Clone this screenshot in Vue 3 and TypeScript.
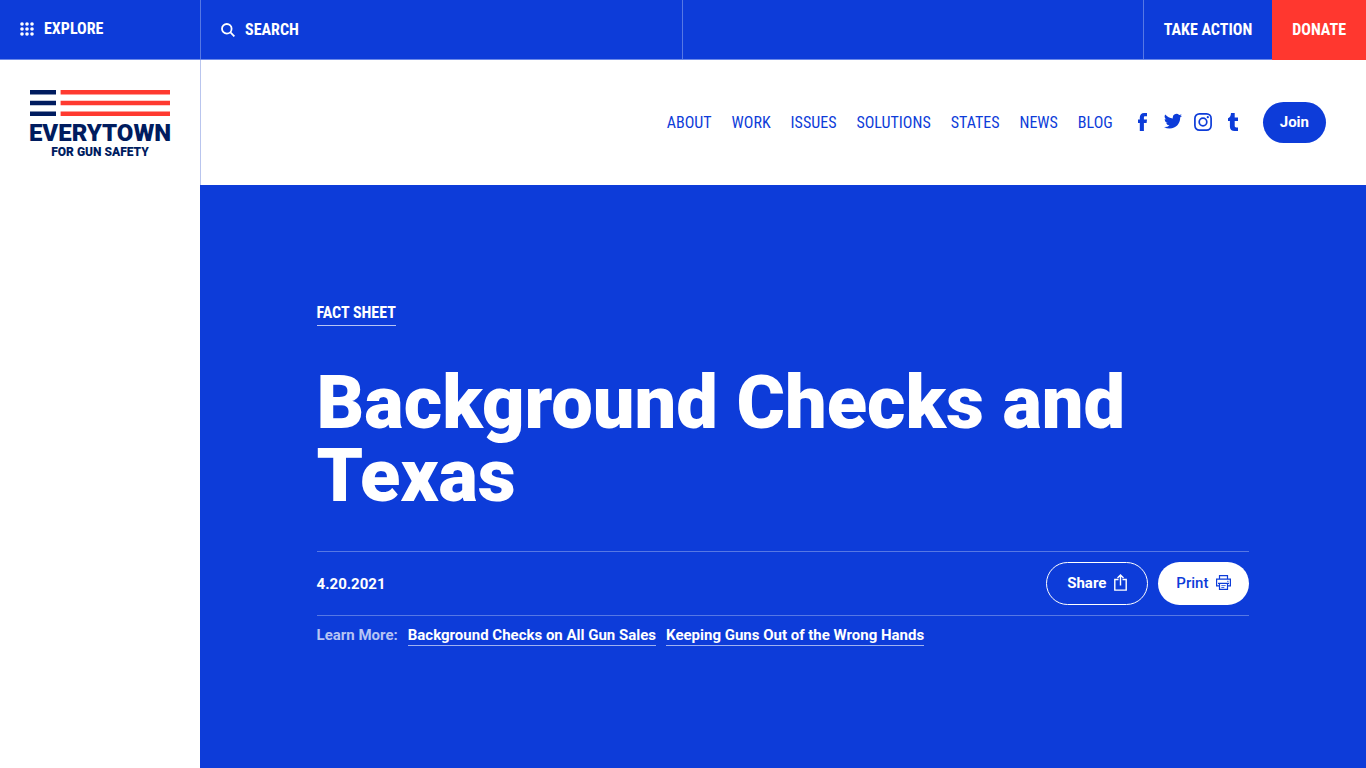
<script setup lang="ts">
interface LinkItem {
  label: string
  href: string
}

const navItems: LinkItem[] = [
  { label: 'ABOUT', href: '#about' },
  { label: 'WORK', href: '#work' },
  { label: 'ISSUES', href: '#issues' },
  { label: 'SOLUTIONS', href: '#solutions' },
  { label: 'STATES', href: '#states' },
  { label: 'NEWS', href: '#news' },
  { label: 'BLOG', href: '#blog' },
]

const learnMore: LinkItem[] = [
  { label: 'Background Checks on All Gun Sales', href: '#background-checks' },
  { label: 'Keeping Guns Out of the Wrong Hands', href: '#keeping-guns-out' },
]

const dots: number[] = [2, 7, 12]
</script>

<template>
  <div class="page">
    <div class="topbar">
      <div class="top-left">
        <button class="top-item explore" type="button">
          <svg width="14" height="14" viewBox="0 0 14 14" fill="currentColor" aria-hidden="true">
            <template v-for="y in dots" :key="y">
              <circle v-for="x in dots" :key="x" :cx="x" :cy="y" r="1.8" />
            </template>
          </svg>
          <span>EXPLORE</span>
        </button>
        <button class="top-item search" type="button">
          <svg width="14" height="14" viewBox="0 0 14 14" fill="none" stroke="currentColor" stroke-width="1.8" aria-hidden="true">
            <circle cx="5.8" cy="5.8" r="4.8" />
            <path d="M9.2 9.2 13.4 13.4" />
          </svg>
          <span>SEARCH</span>
        </button>
      </div>
      <div class="top-right">
        <a class="top-item action" href="#take-action">TAKE ACTION</a>
        <a class="top-item donate" href="#donate">DONATE</a>
      </div>
    </div>

    <div class="body">
      <aside class="sidebar">
        <a class="logo" href="#home">
          <svg class="flag" viewBox="0 0 140 26" aria-hidden="true">
            <path fill="#001c5f" d="M0 0h26v4.4H0zM0 10.8h26v4.4H0zM0 21.6h26V26H0z" />
            <path fill="#ff3a30" d="M30.6 0H140v4.4H30.6zM30.6 10.8H140v4.4H30.6zM30.6 21.6H140V26H30.6z" />
          </svg>
          <span class="logo-name">EVERYTOWN</span>
          <span class="logo-tag">FOR GUN SAFETY</span>
        </a>
      </aside>

      <div class="content">
        <header class="header">
          <nav class="nav">
            <a v-for="item in navItems" :key="item.label" :href="item.href">{{ item.label }}</a>
          </nav>
          <div class="social">
            <a href="#facebook" aria-label="Facebook">
              <svg width="18" height="18" viewBox="0 0 18 18" fill="currentColor">
                <path d="M5.800 18V10H4V6.600h1.800V4.600C5.800 1.700 7.400 0 10.100 0H13v3.300h-1.700C10.200 3.300 9.900 3.700 9.900 4.700v1.900H13L12.600 10H9.900v8z" />
              </svg>
            </a>
            <a href="#twitter" aria-label="Twitter">
              <svg width="18" height="18" viewBox="0 1 24 24" fill="currentColor">
                <path d="M24 4.560a9.800 9.800 0 0 1-2.830.780 4.930 4.930 0 0 0 2.160-2.720 9.860 9.860 0 0 1-3.120 1.190 4.920 4.920 0 0 0-8.390 4.490A13.970 13.970 0 0 1 1.670 3.150a4.930 4.930 0 0 0 1.530 6.570 4.900 4.900 0 0 1-2.230-.610v.060a4.930 4.930 0 0 0 3.950 4.830 4.900 4.900 0 0 1-2.220.080 4.930 4.930 0 0 0 4.600 3.420A9.870 9.870 0 0 1 0 19.540a13.940 13.940 0 0 0 7.550 2.210c9.140 0 14.310-7.720 13.990-14.640A10.020 10.020 0 0 0 24 4.560z" />
              </svg>
            </a>
            <a href="#instagram" aria-label="Instagram">
              <svg width="18" height="18" viewBox="0 0 18 18" fill="none" stroke="currentColor" stroke-width="1.7">
                <rect x="0.9" y="0.9" width="16.2" height="16.2" rx="4.5" />
                <circle cx="9" cy="9" r="3.8" />
                <circle cx="13.8" cy="4.2" r="1.1" fill="currentColor" stroke="none" />
              </svg>
            </a>
            <a href="#tumblr" aria-label="Tumblr">
              <svg width="18" height="18" viewBox="0 0 18 18" fill="currentColor">
                <path d="M7 0h3.700v4.500H14v3.600h-3.300v4.700c0 1.200.500 1.600 1.600 1.600H14V18h-3.300c-3.100 0-4.800-1.500-4.800-4.300V8.100H4V5.200C6 4.500 6.800 2.900 7 0z" />
              </svg>
            </a>
          </div>
          <a class="join" href="#join">Join</a>
        </header>

        <main class="hero">
          <a class="category" href="#fact-sheets">FACT SHEET</a>
          <h1>Background Checks and Texas</h1>
          <div class="meta">
            <time datetime="2021-04-20">4.20.2021</time>
            <div class="buttons">
              <button class="pill share" type="button">
                <span>Share</span>
                <svg width="13" height="17" viewBox="0 0 13 17" fill="none" stroke="currentColor" stroke-width="1.4" aria-hidden="true">
                  <path d="M4.500 5.500H.800v10.600h11.400V5.500H8.500M6.500 11.500V1.200M3.500 4 6.500 1l3 3" />
                </svg>
              </button>
              <button class="pill print" type="button">
                <span>Print</span>
                <svg width="15" height="15" viewBox="0 0 15 15" fill="none" stroke="currentColor" stroke-width="1.2" aria-hidden="true">
                  <path d="M3.500 4.200V.600h8v3.600M3.500 10.800H.600V4.200h13.800v6.600h-2.900M3.500 8.400h8v6h-8zM2 8.400h11" />
                  <path d="M5.300 10.600h4.400M5.300 12.500h3M11 6.300h1.600" stroke-width="0.8" />
                </svg>
              </button>
            </div>
          </div>
          <div class="learn">
            <span>Learn More:</span>
            <a v-for="item in learnMore" :key="item.label" :href="item.href">{{ item.label }}</a>
          </div>
        </main>
      </div>
    </div>
  </div>
</template>

<style>
body {
  margin: 0;
}
</style>

<style scoped>
.page {
  display: flex;
  flex-direction: column;
  min-height: 100vh;
  font-family: Roboto, "Liberation Sans", sans-serif;
  font-weight: 700;
  color: #0d3cd9;
  background: #fff;
}

a {
  color: inherit;
  text-decoration: none;
}

button {
  font: inherit;
  color: inherit;
  background: none;
  border: 0;
  cursor: pointer;
}

.topbar,
.nav,
.category {
  font-family: "Roboto Condensed", "Liberation Sans Narrow", sans-serif;
  font-size: 16px;
}

.topbar {
  display: flex;
  height: 60px;
  box-sizing: border-box;
  border-bottom: 1px solid #6d8ae8;
  background: #0d3cd9;
  color: #fff;
}

.top-left {
  display: flex;
  flex: 0 0 50%;
  box-sizing: border-box;
  border-right: 1px solid #5678e4;
}

.top-right {
  display: flex;
  flex: 1;
  justify-content: flex-end;
}

.top-item {
  display: flex;
  align-items: center;
  gap: 10px;
  padding: 0 20px;
  white-space: nowrap;
}

.explore {
  flex: 0 0 200px;
  padding-bottom: 2px;
}

.search {
  flex: 1;
  border-left: 1px solid #5678e4;
}

.action {
  border-left: 1px solid #5678e4;
}

.donate {
  margin-bottom: -1px;
  padding-bottom: 2px;
  background: #ff372f;
}

.body {
  display: flex;
  flex: 1;
}

.sidebar {
  flex: 0 0 200px;
  min-width: 0;
  box-sizing: border-box;
  padding: 30px;
}

.logo {
  display: flex;
  flex-direction: column;
  align-items: center;
  color: #001c5f;
}

.flag {
  display: block;
  width: 100%;
}

.logo-name {
  margin-top: 5px;
  font-weight: 900;
  font-size: 24px;
  line-height: 24px;
}

.logo-tag {
  font-weight: 900;
  font-size: 12px;
  line-height: 14px;
}

.content {
  display: flex;
  flex: 1;
  flex-direction: column;
  min-width: 0;
}

.header {
  display: flex;
  align-items: center;
  justify-content: flex-end;
  height: 125px;
  box-sizing: border-box;
  padding: 0 40px;
  border-left: 1px solid #b9c5ee;
}

.nav {
  display: flex;
  gap: 20px;
  font-weight: 400;
}

.social {
  display: flex;
  margin: 0 15px;
  padding-bottom: 2px;
}

.social a {
  display: flex;
  justify-content: center;
  width: 30px;
}

.join {
  padding: 10px 17px;
  border-radius: 21px;
  background: #0d3cd9;
  color: #fff;
  font-size: 15px;
  line-height: 21px;
}

.hero {
  flex: 1;
  padding: 116px 10%;
  background: #0d3cd9;
  color: #fff;
  font-size: 15px;
  line-height: 20px;
}

.category {
  display: inline-block;
  border-bottom: 1px solid #b6c4f4;
  line-height: 24px;
}

h1 {
  margin: 40px 0 39px;
  font-weight: 900;
  font-size: 74px;
  line-height: 73px;
}

.meta {
  display: flex;
  align-items: center;
  justify-content: space-between;
  padding: 10px 0;
  border: solid #5678e4;
  border-width: 1px 0;
}

.buttons {
  display: flex;
  gap: 10px;
}

.pill {
  display: flex;
  align-items: center;
  gap: 8px;
  height: 43px;
  border-radius: 22px;
}

.share {
  padding: 0 20px 2px;
  border: 1px solid #fff;
}

.print {
  padding: 0 18px 2px;
  background: #fff;
  color: #0d3cd9;
  font-weight: 500;
}

.learn {
  display: flex;
  flex-wrap: wrap;
  gap: 10px;
  padding-top: 10px;
}

.learn span {
  color: #b6c4f4;
}

.learn a {
  border-bottom: 1px solid #9eb1f0;
}

.learn span,
.learn a {
  line-height: 19px;
}
</style>
